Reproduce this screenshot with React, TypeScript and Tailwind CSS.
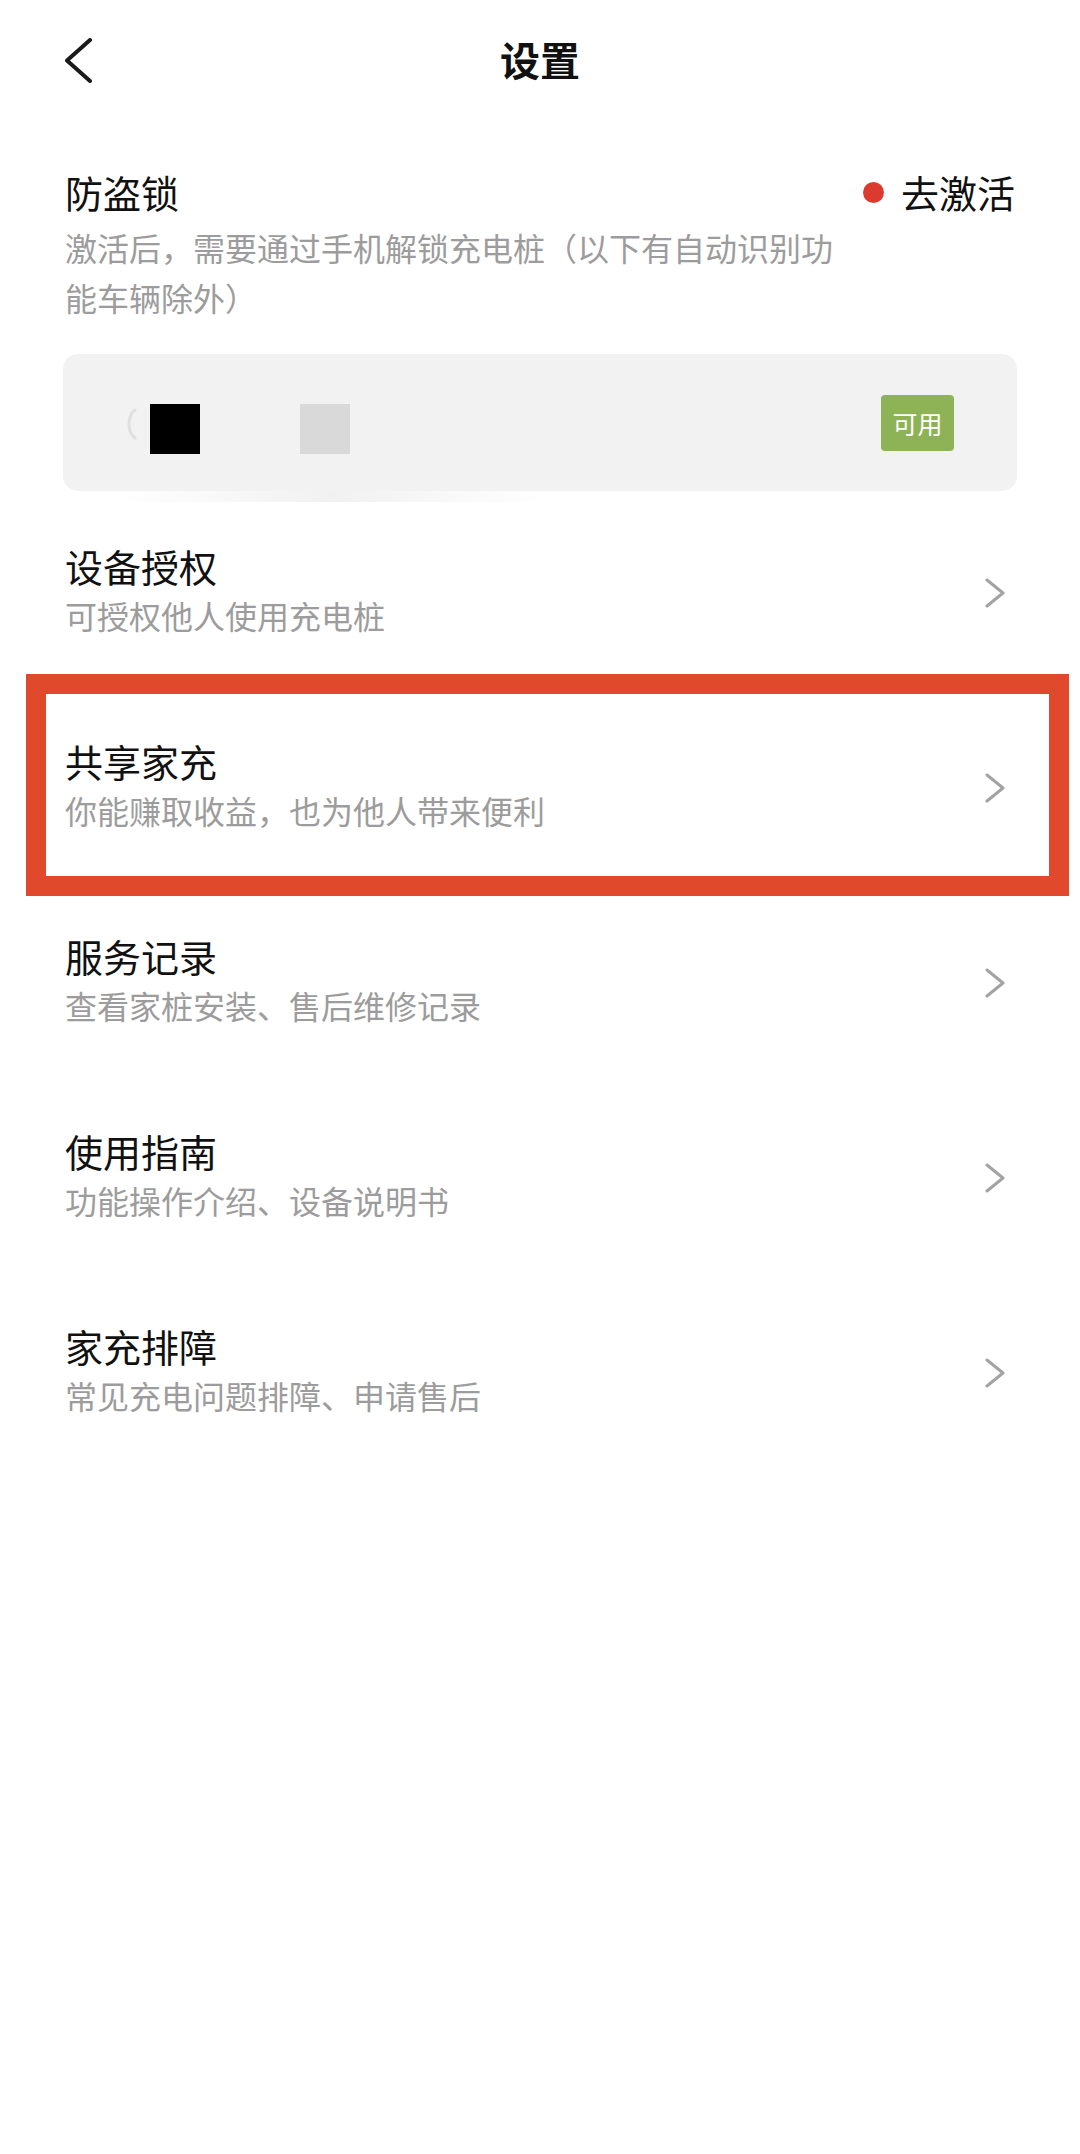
import React from "react";

function Chevron() {
  return (
    <svg width="22" height="30" viewBox="0 0 22 30" fill="none" className="shrink-0">
      <path d="M3 2 L19 15 L3 28" stroke="#a3a3a3" strokeWidth="3" strokeLinecap="round" strokeLinejoin="round" />
    </svg>
  );
}

const rows = [
  { title: "设备授权", sub: "可授权他人使用充电桩" },
  { title: "共享家充", sub: "你能赚取收益，也为他人带来便利", highlight: true },
  { title: "服务记录", sub: "查看家桩安装、售后维修记录" },
  { title: "使用指南", sub: "功能操作介绍、设备说明书" },
  { title: "家充排障", sub: "常见充电问题排障、申请售后" },
];

export default function App() {
  return (
    <div className="w-[1080px] min-h-[2154px] bg-white font-['Noto_Sans_CJK_SC','Noto_Sans',sans-serif] text-[#111111]">
      {/* Header */}
      <div className="grid grid-cols-[1fr_auto_1fr] items-center h-[122px] px-[63px]">
        <svg width="30" height="46" viewBox="0 0 30 46" fill="none">
          <path d="M27 2 L4 22.5 L27 43" stroke="#1a1a1a" strokeWidth="4" strokeLinecap="round" strokeLinejoin="round" />
        </svg>
        <div className="text-[40px] font-bold leading-[52px] text-[#111111] mb-[4px]">设置</div>
        <div />
      </div>

      {/* Anti-theft */}
      <div className="px-[63px] pt-[44px]">
        <div className="flex items-start justify-between">
          <div className="text-[38px] leading-[52px] pl-[2px]">防盗锁</div>
          <div className="flex items-center gap-[17px] pr-[2px]">
            <div className="w-[21px] h-[21px] rounded-full bg-[#dc3a2f]" />
            <div className="text-[38px] leading-[52px]">去激活</div>
          </div>
        </div>
        <div className="w-[780px] pl-[2px] mt-[4px] text-[32px] leading-[50px] text-[#9c9c9c]">
          激活后，需要通过手机解锁充电桩（以下有自动识别功能车辆除外）
        </div>

        <div className="relative mt-[32px]">
          <div className="h-[137px] rounded-[15px] bg-[#f2f2f2] flex items-start justify-between pl-[60px] pr-[63px]">
            <div className="flex items-start pt-[50px]">
              <svg width="16" height="32" viewBox="0 0 16 32" fill="none" className="mt-[4px]">
                <path d="M12 2 C4 8 4 24 12 30" stroke="#e0e0e0" strokeWidth="3" strokeLinecap="round" />
              </svg>
              <div className="w-[50px] h-[50px] bg-black ml-[11px]" />
              <div className="w-[50px] h-[50px] bg-[#d9d9d9] ml-[100px]" />
            </div>
            <div className="mt-[41px] w-[73px] h-[56px] rounded-[4px] bg-[#8db356] flex items-center justify-center text-white text-[25px] leading-none">
              可用
            </div>
          </div>
          <div className="absolute top-full left-[54px] w-[430px] h-[11px] bg-gradient-to-r from-transparent via-[#f1f1f1] to-transparent" />
        </div>
      </div>

      {/* Rows */}
      <div className="mt-[1px]">
        {rows.map((r) => (
          <div key={r.title} className="relative h-[195px] flex items-center justify-between pl-[65px] pr-[74px] pt-[6px]">
            <div className="mb-[8px]">
              <div className="text-[38px] leading-[52px]">{r.title}</div>
              <div className="text-[32px] leading-[46px] text-[#9c9c9c]">{r.sub}</div>
            </div>
            <Chevron />
            {r.highlight && (
              <div className="absolute top-[-13px] bottom-[-14px] left-[26px] right-[11px] border-[20px] border-[#e0492c] pointer-events-none" />
            )}
          </div>
        ))}
      </div>
    </div>
  );
}
